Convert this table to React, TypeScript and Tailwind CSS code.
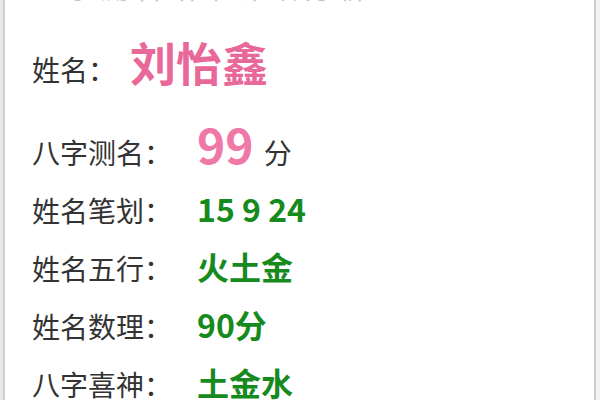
const font = "font-['Noto_Sans_CJK_SC','Noto_Sans',sans-serif]";

const rows = [
  { label: '姓名笔划：', value: '15 9 24' },
  { label: '姓名五行：', value: '火土金' },
  { label: '姓名数理：', value: '90分' },
  { label: '八字喜神：', value: '土金水' },
];

export default function App() {
  return (
    <div className={`flex h-[400px] w-[600px] overflow-hidden bg-white ${font}`}>
      {/* 左侧边框 */}
      <div className="h-full w-[3px] bg-[#e8e8e8]" />
      <div className="h-full w-[2px] bg-[#cfcfcf]" />

      <div className="flex flex-1 flex-col pl-[27px]">
        {/* 顶部被裁掉的标题 */}
        <div className="h-[4px] shrink-0 overflow-hidden">
          <div className="-mt-[27px] text-[28px] leading-[28px] tracking-[6px] text-[#c4c4c4]">
            八字测名结果详细分析
          </div>
        </div>

        {/* 姓名 */}
        <div className="mt-[31px] flex h-[52px] shrink-0 items-center">
          <div className="flex items-baseline">
            <span className="w-[98px] text-[28px] leading-none text-[#333333]">姓名：</span>
            <span className="text-[46px] font-bold leading-none text-[#e8689a]">刘怡鑫</span>
          </div>
        </div>

        {/* 八字测名 */}
        <div className="mt-[20px] flex h-[72px] shrink-0 items-center">
          <div className="flex items-baseline">
            <span className="w-[165px] text-[28px] leading-none text-[#333333]">八字测名：</span>
            <span className="text-[48px] font-bold leading-none text-[#ef78a6]">99</span>
            <span className="ml-[10px] text-[28px] leading-none text-[#333333]">分</span>
          </div>
        </div>

        {rows.map((r) => (
          <div key={r.label} className="flex h-[58px] shrink-0 items-center">
            <div className="flex items-baseline">
              <span className="w-[165px] text-[28px] leading-none text-[#333333]">{r.label}</span>
              <span className="text-[32px] font-bold leading-none text-[#168a1c]">{r.value}</span>
            </div>
          </div>
        ))}
      </div>

      {/* 右侧边框 */}
      <div className="h-full w-[2px] bg-[#cccccc]" />
      <div className="h-full w-[4px] bg-[#f2f2f2]" />
    </div>
  );
}
